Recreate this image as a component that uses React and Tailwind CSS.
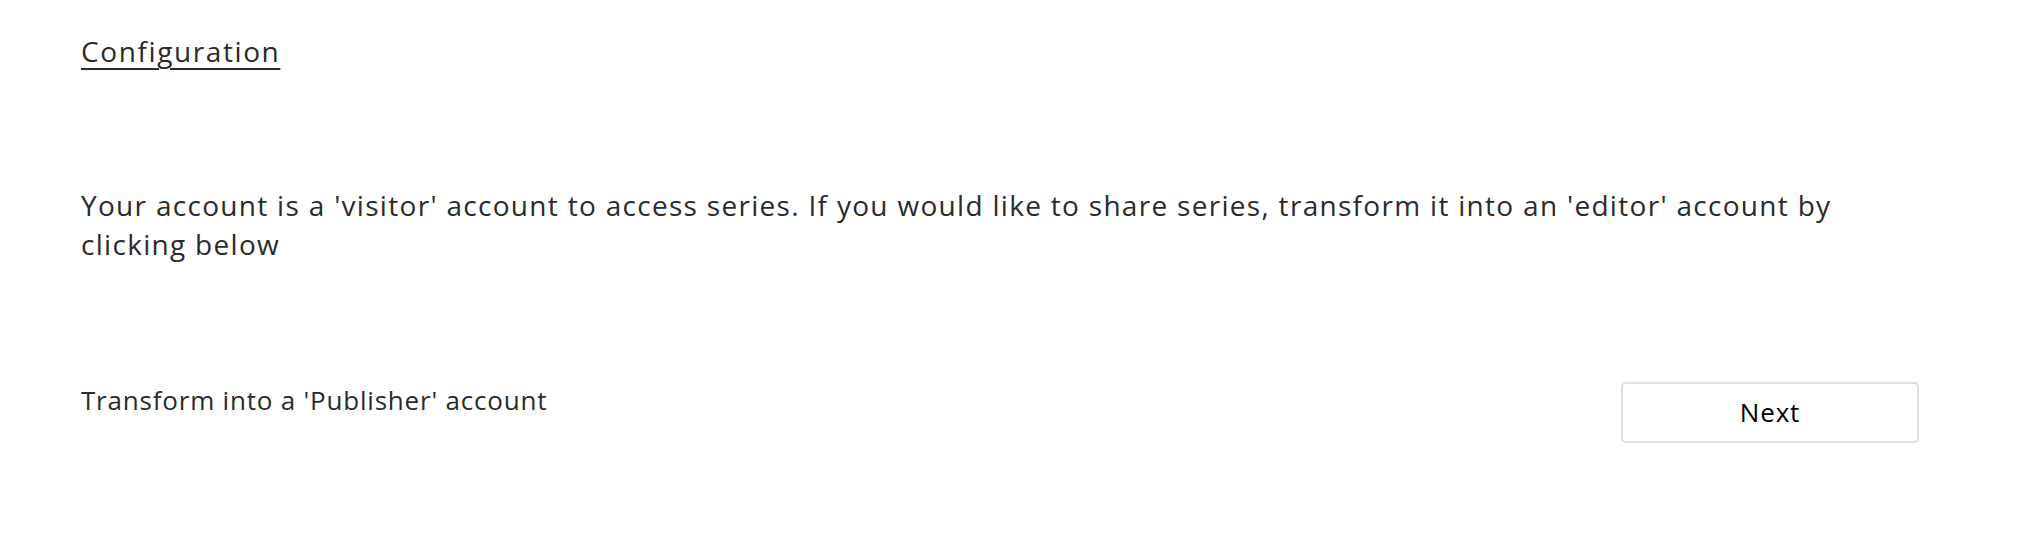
import React from 'react';

const App = () => {
  return (
    <div
      className="min-h-[546px] bg-white pl-[81px] pr-[122px] pt-[32px] text-[#2b2b2b]"
      style={{ fontFamily: '"Open Sans", "Noto Sans", sans-serif' }}
    >
      <a href="#" className="text-[28px] leading-[38px] tracking-[1.6px] underline underline-offset-[6px] decoration-[2px]">
        Configuration
      </a>
      <p className="mt-[116px] text-[28px] leading-[39px] tracking-[1.3px]">
        Your account is a 'visitor' account to access series. If you would like to share series, transform it into an
        'editor' account by clicking below
      </p>
      <div className="mt-[118px] flex items-start justify-between">
        <span className="text-[26px] leading-[36px] tracking-[0.8px]">Transform into a 'Publisher' account</span>
        <button className="h-[61px] w-[298px] rounded-[5px] border-2 border-[#dedede] bg-white text-[26px] tracking-[0.8px] text-black">
          Next
        </button>
      </div>
    </div>
  );
};

export default App;
